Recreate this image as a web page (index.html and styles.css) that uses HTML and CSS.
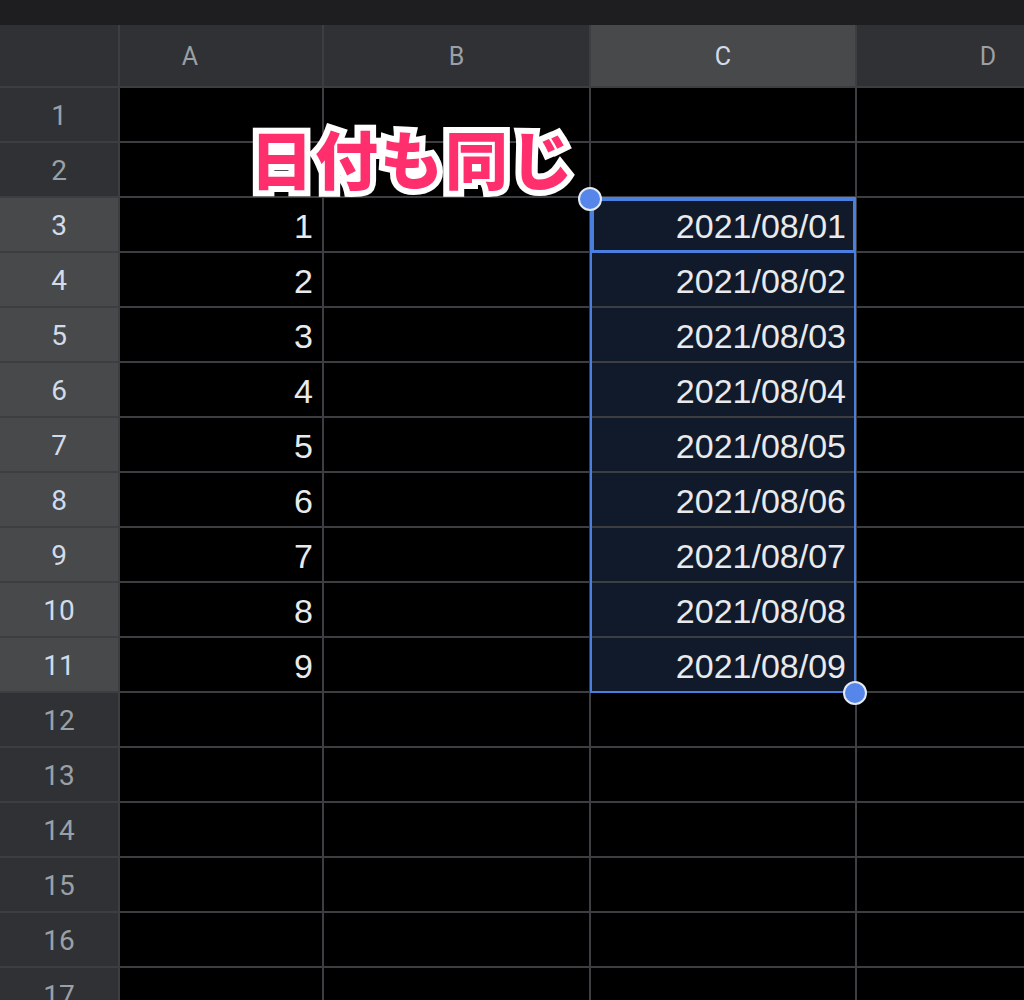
FILE: index.html
```html
<!DOCTYPE html>
<html lang="ja">

<head>
    <meta charset="utf-8">
    <title>Sheet</title>
    <link rel="stylesheet" href="styles.css">
</head>

<body>
    <div class="topbar"></div>
    <div class="sheet">
        <div class="grid">
            <div class="corner"></div>
            <div class="col-head first">A</div>
            <div class="col-head">B</div>
            <div class="col-head active">C</div>
            <div class="col-head">D</div>

            <div class="row-head">1</div><div class="cell"></div><div class="cell"></div><div class="cell"></div><div class="cell"></div>
            <div class="row-head">2</div><div class="cell"></div><div class="cell"></div><div class="cell"></div><div class="cell"></div>
            <div class="row-head active">3</div><div class="cell">1</div><div class="cell"></div><div class="cell sel">2021/08/01</div><div class="cell"></div>
            <div class="row-head active">4</div><div class="cell">2</div><div class="cell"></div><div class="cell sel">2021/08/02</div><div class="cell"></div>
            <div class="row-head active">5</div><div class="cell">3</div><div class="cell"></div><div class="cell sel">2021/08/03</div><div class="cell"></div>
            <div class="row-head active">6</div><div class="cell">4</div><div class="cell"></div><div class="cell sel">2021/08/04</div><div class="cell"></div>
            <div class="row-head active">7</div><div class="cell">5</div><div class="cell"></div><div class="cell sel">2021/08/05</div><div class="cell"></div>
            <div class="row-head active">8</div><div class="cell">6</div><div class="cell"></div><div class="cell sel">2021/08/06</div><div class="cell"></div>
            <div class="row-head active">9</div><div class="cell">7</div><div class="cell"></div><div class="cell sel">2021/08/07</div><div class="cell"></div>
            <div class="row-head active">10</div><div class="cell">8</div><div class="cell"></div><div class="cell sel">2021/08/08</div><div class="cell"></div>
            <div class="row-head active">11</div><div class="cell">9</div><div class="cell"></div><div class="cell sel">2021/08/09</div><div class="cell"></div>
            <div class="row-head">12</div><div class="cell"></div><div class="cell"></div><div class="cell"></div><div class="cell"></div>
            <div class="row-head">13</div><div class="cell"></div><div class="cell"></div><div class="cell"></div><div class="cell"></div>
            <div class="row-head">14</div><div class="cell"></div><div class="cell"></div><div class="cell"></div><div class="cell"></div>
            <div class="row-head">15</div><div class="cell"></div><div class="cell"></div><div class="cell"></div><div class="cell"></div>
            <div class="row-head">16</div><div class="cell"></div><div class="cell"></div><div class="cell"></div><div class="cell"></div>
            <div class="row-head">17</div><div class="cell"></div><div class="cell"></div><div class="cell"></div><div class="cell"></div>
        </div>

        <!-- selection overlay -->
        <div class="selection"></div>
        <div class="active-cell"></div>
        <div class="handle handle-start"></div>
        <div class="handle handle-end"></div>

        <div class="note">日付も同じ</div>
    </div>
</body>

</html>
```

FILE: styles.css
```css
body {
    margin: 0;
    background-color: #000;
    font-family: Roboto, "Noto Sans", sans-serif;
    overflow: hidden;
}

.topbar {
    height: 25px;
    background-color: #1e1e20;
}

.sheet {
    position: relative;
    height: 975px;
    overflow: hidden;
}

.grid {
    display: grid;
    grid-template-columns: 118px 202px 265px 264px 262px;
    grid-template-rows: 61px;
    grid-auto-rows: 53px;
    gap: 2px;
    background-color: #3d3e41;
    width: 1119px;
}

.corner,
.col-head,
.row-head {
    background-color: #303134;
    color: #9aa0a6;
    display: flex;
    align-items: center;
    justify-content: center;
}

.col-head {
    font-size: 25px;
    padding-top: 2px;
}

.col-head.first {
    padding-right: 62px;
}

.row-head {
    font-size: 28px;
    padding-top: 2px;
}

.col-head.active,
.row-head.active {
    background-color: #48494b;
    color: #d2dbea;
}

.cell {
    background-color: #000;
    color: #e8eaed;
    font-family: "Liberation Sans", Arial, sans-serif;
    font-size: 34px;
    display: flex;
    align-items: center;
    justify-content: flex-end;
    padding-right: 9px;
    padding-top: 4px;
}

.cell.sel {
    background-color: #111a2b;
}

.selection {
    position: absolute;
    left: 590px;
    top: 172px;
    width: 262px;
    height: 492px;
    border: 2px solid #4a7fe0;
}

.active-cell {
    position: absolute;
    left: 591px;
    top: 173px;
    width: 259px;
    height: 49px;
    border: 3px solid #4a7fe0;
}

.handle {
    position: absolute;
    width: 20px;
    height: 20px;
    border-radius: 50%;
    background-color: #5686ea;
    border: 2px solid #e4e9f3;
}

.handle-start {
    left: 578px;
    top: 162px;
}

.handle-end {
    left: 843px;
    top: 656px;
}

.note {
    position: absolute;
    left: 250px;
    top: 86px;
    font-family: "Noto Sans CJK JP", sans-serif;
    font-weight: 900;
    font-size: 63px;
    letter-spacing: 2px;
    color: #ff2f6d;
    -webkit-text-stroke: 12px #fff;
    paint-order: stroke fill;
}
```
